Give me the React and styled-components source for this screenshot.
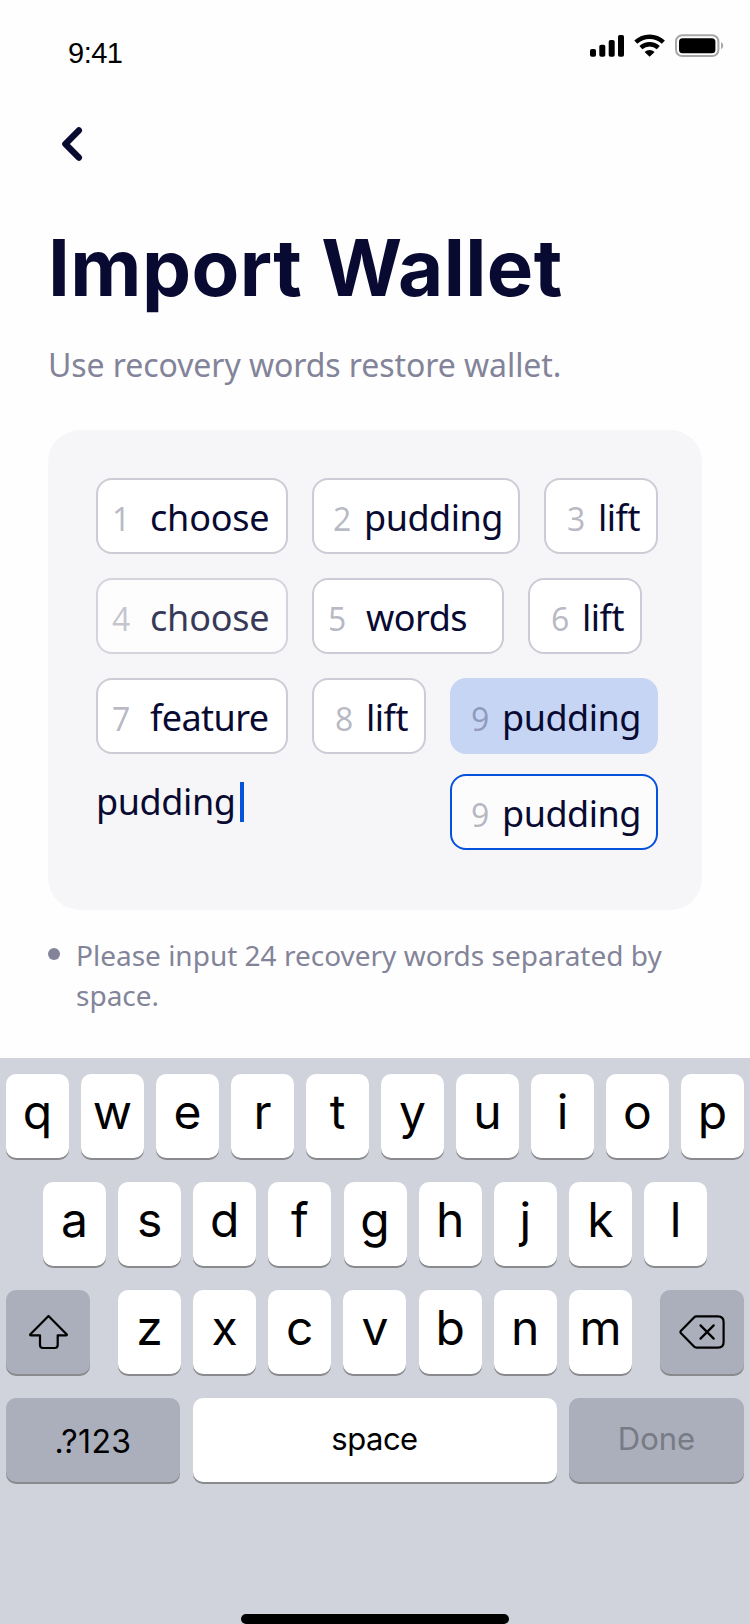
import React from 'react';
import styled, { createGlobalStyle, css } from 'styled-components';

const ink = '#080a32';
const muted = '#838499';
const blue = '#0552dc';

const GlobalStyle = createGlobalStyle`
  *, *::before, *::after { box-sizing: border-box; }
  body { margin: 0; background: #fff; }
`;

const Screen = styled.div`
  display: flex;
  flex-direction: column;
  width: 750px;
  height: 1624px;
  background: #fefefe;
  overflow: hidden;
  font-family: "Noto Sans", "Open Sans", sans-serif;
  color: ${ink};
`;

const StatusBar = styled.header`
  display: flex;
  justify-content: space-between;
  height: 88px;
  padding: 34px 26px 0 68px;
`;

const Clock = styled.span`
  padding-top: 3px;
  font: 29px/32px "Liberation Sans", Arial, sans-serif;
  letter-spacing: -0.5px;
  color: #000;
`;

const StatusIcons = styled.div`
  display: flex;
  align-items: flex-start;
  gap: 9px;
  svg { display: block; }
`;

const NavBar = styled.nav`
  height: 132px;
  padding: 36px 58px 0;
`;

const BackButton = styled.button`
  display: block;
  width: 28px;
  height: 40px;
  padding: 0;
  border: 0;
  background: none;
  svg { display: block; }
`;

const Content = styled.main`
  flex: 1;
  display: flex;
  flex-direction: column;
  padding: 0 48px;
`;

const Title = styled.h1`
  margin: 0;
  font: 700 78px/96px Inter, Roboto, sans-serif;
  letter-spacing: 0.4px;
  text-indent: 0;
  white-space: nowrap;
`;

const Subtitle = styled.p`
  margin: 29px 0 45px;
  font-size: 32px;
  line-height: 40px;
  letter-spacing: -0.08px;
  color: ${muted};
`;

const Panel = styled.section`
  display: flex;
  flex-direction: column;
  gap: 24px;
  height: 480px;
  padding: 48px 44px 0 48px;
  border-radius: 32px;
  background: #f6f6f9;
`;

const ChipRow = styled.div`
  display: flex;
  gap: 24px;
`;

const chipKinds = {
  plain: css`
    border-color: #cdccd6;
    background: #fff;
  `,
  faded: css`
    border-color: #cdccd6;
    background: #fff;
    opacity: 0.8;
  `,
  selected: css`
    border-color: transparent;
    background: #c6d5f4;
    background-clip: border-box;
  `,
  dragging: css`
    border-color: ${blue};
    background: #fcfcfd;
  `,
};

const Chip = styled.div`
  display: flex;
  align-items: baseline;
  width: ${p => p.$width}px;
  height: 76px;
  padding-left: ${p => p.$inset}px;
  border: 2px solid;
  border-radius: 16px;
  line-height: 75px;
  white-space: nowrap;
  ${p => chipKinds[p.$kind]}
`;

const ChipNumber = styled.span`
  flex: none;
  width: ${p => p.$width}px;
  font-size: 32px;
  color: rgba(8, 10, 50, 0.3);
`;

const ChipWord = styled.span`
  font-size: 36px;
  letter-spacing: ${p => p.$tracking}px;
`;

const EntryRow = styled.div`
  display: flex;
  justify-content: space-between;
  align-items: flex-start;
  margin-top: -4px;
`;

const Entry = styled.div`
  display: flex;
  align-items: flex-start;
  gap: 4px;
  padding-top: 4px;
  font-size: 36px;
  line-height: 48px;
  letter-spacing: -0.4px;
`;

const Caret = styled.span`
  width: 4px;
  height: 40px;
  margin-top: 4px;
  background: ${blue};
`;

const Hint = styled.p`
  display: flex;
  gap: 16px;
  margin: 25px 0 0;
  font-size: 28px;
  line-height: 40px;
  color: ${muted};
`;

const Bullet = styled.span`
  flex: none;
  width: 12px;
  height: 12px;
  margin-top: 13px;
  border-radius: 50%;
  background: ${muted};
`;

const Keyboard = styled.section`
  display: flex;
  flex-direction: column;
  gap: 24px;
  height: 566px;
  padding: 16px 6px 0;
  background: #d0d3db;
  font-family: Inter, Roboto, sans-serif;
  color: #000;
`;

const KeyRow = styled.div`
  display: flex;
  justify-content: space-between;
  padding: 0 ${p => p.$inset || 0}px;
`;

const LetterGroup = styled.div`
  display: flex;
  justify-content: space-between;
  width: 514px;
`;

const Key = styled.button`
  width: ${p => p.$width || 63}px;
  height: 84px;
  padding: 0;
  border: 0;
  border-radius: 10px;
  background: #fff;
  box-shadow: 0 2px 0 #898a8d;
  font-family: inherit;
  font-size: 48px;
  font-weight: 375;
  line-height: 76px;
  color: inherit;
  display: flex;
  justify-content: center;
`;

const WordKey = styled(Key)`
  font-size: ${p => p.$size}px;
  font-weight: 400;
  line-height: ${p => p.$line}px;
  letter-spacing: ${p => p.$tracking || 0}px;
`;

const SystemKey = styled(WordKey)`
  align-items: center;
  background: #abaebb;
  color: ${p => (p.$disabled ? '#777b84' : '#000')};
`;

const KeyLabel = styled.span`
  display: block;
  height: 84px;
`;

const HomeBar = styled.div`
  width: 268px;
  height: 10px;
  margin: auto auto 0;
  border-radius: 5px;
  background: #000;
`;

const rows = [
  [
    { n: 1, word: 'choose', width: 192, inset: 14, num: 38, tracking: -0.2 },
    { n: 2, word: 'pudding', width: 208, inset: 19, num: 31 },
    { n: 3, word: 'lift', width: 114, inset: 21, num: 31 },
  ],
  [
    { n: 4, word: 'choose', width: 192, inset: 14, num: 38, tracking: -0.2, kind: 'faded' },
    { n: 5, word: 'words', width: 192, inset: 14, num: 38, tracking: -0.5 },
    { n: 6, word: 'lift', width: 114, inset: 21, num: 31 },
  ],
  [
    { n: 7, word: 'feature', width: 192, inset: 14, num: 38, tracking: -0.6 },
    { n: 8, word: 'lift', width: 114, inset: 21, num: 31 },
    { n: 9, word: 'pudding', width: 208, inset: 19, num: 31, kind: 'selected' },
  ],
];

const dragged = { n: 9, word: 'pudding', width: 208, inset: 19, num: 31, kind: 'dragging' };

function WordChip({ n, word, width, inset, num, tracking = -0.5, kind = 'plain' }) {
  return (
    <Chip $width={width} $inset={inset} $kind={kind}>
      <ChipNumber $width={num}>{n}</ChipNumber>
      <ChipWord $tracking={tracking}>{word}</ChipWord>
    </Chip>
  );
}

const SignalIcon = () => (
  <svg width="35" height="24" viewBox="0 0 35 24">
    <rect x="0" y="15" width="6" height="7.7" rx="1.8" />
    <rect x="9.3" y="10.8" width="6" height="11.9" rx="1.8" />
    <rect x="18.7" y="6" width="6" height="16.7" rx="1.8" />
    <rect x="28" y="1" width="6" height="21.7" rx="1.8" />
  </svg>
);

const WifiIcon = () => (
  <svg width="32" height="24" viewBox="0 0 32 24">
    <g fill="none" stroke="#000" strokeWidth="4.4">
      <path d="M1.8 8.2A20.2 20.2 0 0 1 29.4 8.2" />
      <path d="M6.9 13.6A12.8 12.8 0 0 1 24.3 13.6" />
    </g>
    <path d="M15.6 22.8L10.6 18A7.3 7.3 0 0 1 20.6 18Z" />
  </svg>
);

const BatteryIcon = () => (
  <svg width="49" height="24" viewBox="0 0 49 24">
    <rect x="1" y="1.2" width="42.4" height="20.8" rx="6.2" fill="none" stroke="#a8a8a8" strokeWidth="2" />
    <rect x="4" y="4.2" width="36.4" height="15" rx="3.5" />
    <path d="M46 8.3c1.3.6 2.2 1.8 2.2 3.4s-.9 2.8-2.2 3.4z" fill="#a8a8a8" />
  </svg>
);

const ShiftIcon = () => (
  <svg width="40" height="36" viewBox="0 0 40 36" fill="none" stroke="#000" strokeWidth="2.2" strokeLinejoin="round">
    <path d="M20.5 2L38.6 20.2Q39.4 21.3 38 21.3H29.7V31Q29.7 34 26.7 34H15Q12 34 12 31V21.3H3Q1.6 21.3 2.4 20.2Z" />
  </svg>
);

const BackspaceIcon = () => (
  <svg width="46" height="36" viewBox="0 0 46 36" fill="none" stroke="#000" strokeWidth="2.2" strokeLinejoin="round" strokeLinecap="round">
    <path d="M17.5 2.4H39Q44.6 2.4 44.6 8V28Q44.6 33.6 39 33.6H17.5Q16 33.6 15 32.5L2 19.2Q.9 18 2 16.8L15 3.5Q16 2.4 17.5 2.4Z" />
    <path d="M21.5 11.4L34.7 24.6M34.7 11.4L21.5 24.6" />
  </svg>
);

const letters = text => text.split('').map(ch => <Key key={ch}>{ch}</Key>);

export default function App() {
  return (
    <Screen>
      <GlobalStyle />
      <StatusBar>
        <Clock>9:41</Clock>
        <StatusIcons>
          <SignalIcon />
          <WifiIcon />
          <BatteryIcon />
        </StatusIcons>
      </StatusBar>
      <NavBar>
        <BackButton aria-label="Back">
          <svg width="28" height="40" viewBox="0 0 28 40" fill="none" stroke={ink} strokeWidth="6.4" strokeLinecap="round" strokeLinejoin="round">
            <path d="M20.8 6.4L7.4 20L20.8 33.6" />
          </svg>
        </BackButton>
      </NavBar>
      <Content>
        <Title>Import Wallet</Title>
        <Subtitle>Use recovery words restore wallet.</Subtitle>
        <Panel>
          {rows.map((row, i) => (
            <ChipRow key={i}>
              {row.map(chip => <WordChip key={chip.n} {...chip} />)}
            </ChipRow>
          ))}
          <EntryRow>
            <Entry>
              pudding
              <Caret />
            </Entry>
            <WordChip {...dragged} />
          </EntryRow>
        </Panel>
        <Hint>
          <Bullet />
          <span>Please input 24 recovery words separated by space.</span>
        </Hint>
      </Content>
      <Keyboard>
        <KeyRow>{letters('qwertyuiop')}</KeyRow>
        <KeyRow $inset={37}>{letters('asdfghjkl')}</KeyRow>
        <KeyRow>
          <SystemKey $width={84} aria-label="Shift"><ShiftIcon /></SystemKey>
          <LetterGroup>{letters('zxcvbnm')}</LetterGroup>
          <SystemKey $width={84} aria-label="Delete"><BackspaceIcon /></SystemKey>
        </KeyRow>
        <KeyRow>
          <SystemKey $width={174} $size={32} $line={87} $tracking={0.4}><KeyLabel>.?123</KeyLabel></SystemKey>
          <WordKey $width={364} $size={31} $line={82} $tracking={-0.5}><KeyLabel>space</KeyLabel></WordKey>
          <SystemKey $width={175} $size={31} $line={82} $disabled><KeyLabel>Done</KeyLabel></SystemKey>
        </KeyRow>
        <HomeBar />
      </Keyboard>
    </Screen>
  );
}
